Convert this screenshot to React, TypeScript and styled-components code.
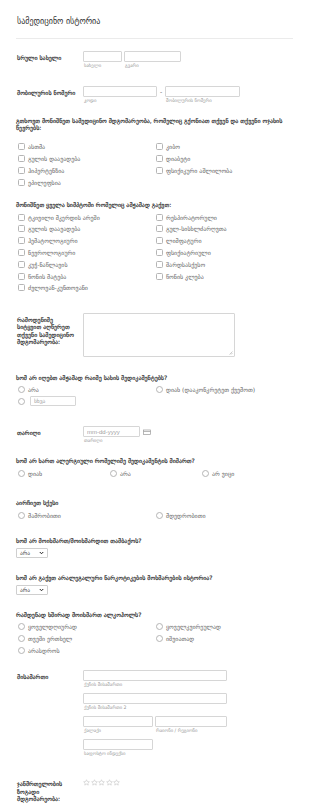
import React from "react";
import styled, { createGlobalStyle } from "styled-components";

const GlobalStyle = createGlobalStyle`
  html, body { margin: 0; padding: 0; background: #fff; }
  body { font-family: "DejaVu Sans", "Noto Sans", sans-serif; color: #555; }
  * { box-sizing: border-box; }
`;

const Page = styled.div`
  width: 310px;
  padding: 17px 17px 24px 16px;
`;

const Header = styled.header`
  padding: 0 0 11px 1px;
  border-bottom: 1px solid #ebebeb;
`;

const Title = styled.h1`
  margin: 0;
  font-size: 8px;
  line-height: 10px;
  font-weight: normal;
  color: #333;
`;

const FieldRow = styled.div<{ $mt: number }>`
  display: flex;
  align-items: flex-start;
  margin-top: ${p => p.$mt}px;
`;

const SideLabel = styled.div`
  flex: 0 0 67px;
  padding: 3px 5px 0 1px;
  font-size: 6px;
  line-height: 7.5px;
  color: #222;
  -webkit-text-stroke: 0.15px #222;
`;

const Controls = styled.div`
  display: flex;
  flex-direction: column;
  gap: 5px;
`;

const InputLine = styled.div`
  display: flex;
  align-items: flex-start;
  gap: 2px;
`;

const Field = styled.div`
  display: flex;
  flex-direction: column;
`;

const TextInput = styled.input<{ $w: number }>`
  width: ${p => p.$w}px;
  height: 11px;
  margin: 0;
  padding: 0 3px;
  border: 1px solid #d6d6d6;
  border-radius: 1px;
  background: #fff;
  font-family: "Liberation Sans", Arial, sans-serif;
  font-size: 6px;
  color: #999;
  outline: none;
  &::placeholder { color: #a0a0a0; }
`;

const SubLabel = styled.span`
  display: block;
  margin-top: 1px;
  padding-left: 1px;
  font-size: 4.7px;
  line-height: 6px;
  color: #999;
`;

const Dash = styled.span`
  width: 4px;
  line-height: 11px;
  font-size: 6px;
  text-align: center;
  color: #555;
`;

const Question = styled.div<{ $mt: number }>`
  margin-top: ${p => p.$mt}px;
  font-size: 6px;
  line-height: 7px;
  color: #222;
  -webkit-text-stroke: 0.15px #222;
`;

const OptionGrid = styled.div<{ $cols: number; $colw: number; $pt?: number }>`
  display: grid;
  grid-template-columns: repeat(${p => p.$cols}, ${p => p.$colw}px);
  grid-auto-rows: 11.8px;
  padding: ${p => p.$pt ?? 3}px 0 0 2px;
`;

const Option = styled.label`
  display: flex;
  align-items: center;
  gap: 3px;
  font-size: 6px;
  color: #666;
  white-space: nowrap;
`;

const Mark = styled.span<{ $round?: boolean }>`
  flex: 0 0 auto;
  width: 7px;
  height: 7px;
  border: 1px solid #b5b5b5;
  border-radius: ${p => (p.$round ? "50%" : "1.5px")};
  background: #fff;
`;

const OtherInput = styled(TextInput)`
  height: 10px;
  margin-left: 2px;
  font-family: "DejaVu Sans", sans-serif;
  font-size: 5.5px;
`;

const TextArea = styled.div`
  position: relative;
  width: 152px;
  height: 44px;
  border: 1px solid #d6d6d6;
  border-radius: 1px;
`;

const Grip = styled.svg`
  position: absolute;
  right: 1px;
  bottom: 1px;
`;

const DateLine = styled.div`
  display: flex;
  align-items: center;
  gap: 3px;
`;

const Select = styled.div`
  display: flex;
  align-items: center;
  justify-content: space-between;
  width: 32px;
  height: 10px;
  margin-top: 4px;
  padding: 0 3px;
  border: 1px solid #cfcfcf;
  border-radius: 1px;
  font-size: 5.5px;
  color: #444;
`;

const Stars = styled.div`
  display: flex;
  gap: 0.5px;
  padding-top: 2px;
`;

const Star = () => (
  <svg width="7" height="7" viewBox="0 0 24 24">
    <path
      d="M12 2.5l2.9 6.2 6.8.8-5 4.7 1.3 6.7L12 17.6l-6 3.3 1.3-6.7-5-4.7 6.8-.8z"
      fill="none"
      stroke="#b8b8b8"
      strokeWidth="1.6"
      strokeLinejoin="round"
    />
  </svg>
);

const Chevron = () => (
  <svg width="5" height="4" viewBox="0 0 10 8">
    <path d="M1.5 2l3.5 3.5L8.5 2" fill="none" stroke="#222" strokeWidth="2" />
  </svg>
);

const CalendarIcon = () => (
  <svg width="8" height="6" viewBox="0 0 16 12">
    <rect x="1" y="2" width="14" height="9" fill="none" stroke="#9a9a9a" strokeWidth="1.4" />
    <line x1="1" y1="5" x2="15" y2="5" stroke="#9a9a9a" strokeWidth="1.4" />
  </svg>
);

const conditions = [
  "ასთმა",
  "კიბო",
  "გულის დაავადება",
  "დიაბეტი",
  "ჰიპერტენზია",
  "ფსიქიკური აშლილობა",
  "ეპილეფსია",
];

const symptoms = [
  "ტკივილი მკერდის არეში",
  "რესპირატორული",
  "გულის დაავადება",
  "გულ-სისხლძარღვთა",
  "ჰემატოლოგიური",
  "ლიმფატური",
  "ნევროლოგიური",
  "ფსიქიატრიული",
  "კუჭ-ნაწლავის",
  "შარდსასქესო",
  "წონის მატება",
  "წონის კლება",
  "ძვლოვან-კუნთოვანი",
];

const alcohol = ["ყოველდღიურად", "ყოველკვირეულად", "თვეში ერთხელ", "იშვიათად", "არასდროს"];

const App = () => (
  <>
    <GlobalStyle />
    <Page>
      <Header>
        <Title>სამედიცინო ისტორია</Title>
      </Header>

      <FieldRow $mt={12}>
        <SideLabel>სრული სახელი</SideLabel>
        <InputLine>
          <Field>
            <TextInput $w={39} />
            <SubLabel>სახელი</SubLabel>
          </Field>
          <Field>
            <TextInput $w={57} />
            <SubLabel>გვარი</SubLabel>
          </Field>
        </InputLine>
      </FieldRow>

      <FieldRow $mt={17}>
        <SideLabel>მობილურის ნომერი</SideLabel>
        <InputLine>
          <Field>
            <TextInput $w={74} />
            <SubLabel>კოდი</SubLabel>
          </Field>
          <Dash>-</Dash>
          <Field>
            <TextInput $w={75} />
            <SubLabel>მობილურის ნომერი</SubLabel>
          </Field>
        </InputLine>
      </FieldRow>

      <Question $mt={13}>
        გთხოვთ მონიშნეთ სამედიცინო მდგომარეობა, რომელიც გქონიათ თქვენ და თქვენი ოჯახის წევრებს:
      </Question>
      <OptionGrid $cols={2} $colw={138} $pt={10}>
        {conditions.map(c => (
          <Option key={c}>
            <Mark />
            {c}
          </Option>
        ))}
      </OptionGrid>

      <Question $mt={13}>მონიშნეთ ყველა სიმპტომი რომელიც ამჟამად გაქვთ:</Question>
      <OptionGrid $cols={2} $colw={138}>
        {symptoms.map(s => (
          <Option key={s}>
            <Mark />
            {s}
          </Option>
        ))}
      </OptionGrid>

      <FieldRow $mt={19}>
        <SideLabel>რამოდენიმე სიტყვით აღწერეთ თქვენი სამედიცინო მდგომარეობა:</SideLabel>
        <TextArea>
          <Grip width="5" height="5" viewBox="0 0 10 10">
            <path d="M9 3L3 9M9 6L6 9" stroke="#999" strokeWidth="1" />
          </Grip>
        </TextArea>
      </FieldRow>

      <Question $mt={17}>ხომ არ იღებთ ამჟამად რაიმე სახის მედიკამენტებს?</Question>
      <OptionGrid $cols={2} $colw={138}>
        <Option>
          <Mark $round />
          არა
        </Option>
        <Option>
          <Mark $round />
          დიახ (დააკონკრეტეთ ქვემოთ)
        </Option>
        <Option>
          <Mark $round />
          <OtherInput $w={46} placeholder="სხვა" readOnly />
        </Option>
      </OptionGrid>

      <FieldRow $mt={19}>
        <SideLabel>თარიღი</SideLabel>
        <Field>
          <DateLine>
            <TextInput $w={57} placeholder="mm-dd-yyyy" readOnly />
            <CalendarIcon />
          </DateLine>
          <SubLabel>თარიღი</SubLabel>
        </Field>
      </FieldRow>

      <Question $mt={13}>ხომ არ ხართ ალერგიული რომელიმე მედიკამენტის მიმართ?</Question>
      <OptionGrid $cols={3} $colw={92}>
        {["დიახ", "არა", "არ ვიცი"].map(o => (
          <Option key={o}>
            <Mark $round />
            {o}
          </Option>
        ))}
      </OptionGrid>

      <Question $mt={20}>აირჩიეთ სქესი</Question>
      <OptionGrid $cols={2} $colw={138}>
        {["მამრობითი", "მდედრობითი"].map(o => (
          <Option key={o}>
            <Mark $round />
            {o}
          </Option>
        ))}
      </OptionGrid>

      <Question $mt={16}>ხომ არ მოიხმართ/მოიხმარდით თამბაქოს?</Question>
      <Select>
        არა
        <Chevron />
      </Select>

      <Question $mt={16}>ხომ არ გაქვთ არალეგალური ნარკოტიკების მოხმარების ისტორია?</Question>
      <Select>
        არა
        <Chevron />
      </Select>

      <Question $mt={16}>რამდენად ხშირად მოიხმართ ალკოჰოლს?</Question>
      <OptionGrid $cols={2} $colw={138}>
        {alcohol.map(o => (
          <Option key={o}>
            <Mark $round />
            {o}
          </Option>
        ))}
      </OptionGrid>

      <FieldRow $mt={14}>
        <SideLabel>მისამართი</SideLabel>
        <Controls>
          <Field>
            <TextInput $w={144} />
            <SubLabel>ქუჩის მისამართი</SubLabel>
          </Field>
          <Field>
            <TextInput $w={144} />
            <SubLabel>ქუჩის მისამართი 2</SubLabel>
          </Field>
          <InputLine>
            <Field>
              <TextInput $w={70} />
              <SubLabel>ქალაქი</SubLabel>
            </Field>
            <Field>
              <TextInput $w={72} />
              <SubLabel>რაიონი / რეგიონი</SubLabel>
            </Field>
          </InputLine>
          <Field>
            <TextInput $w={70} />
            <SubLabel>საფოსტო ინდექსი</SubLabel>
          </Field>
        </Controls>
      </FieldRow>

      <FieldRow $mt={20}>
        <SideLabel>ჯანმრთელობის ზოგადი მდგომარეობა:</SideLabel>
        <Stars>
          {[0, 1, 2, 3, 4].map(i => (
            <Star key={i} />
          ))}
        </Stars>
      </FieldRow>
    </Page>
  </>
);

export default App;
